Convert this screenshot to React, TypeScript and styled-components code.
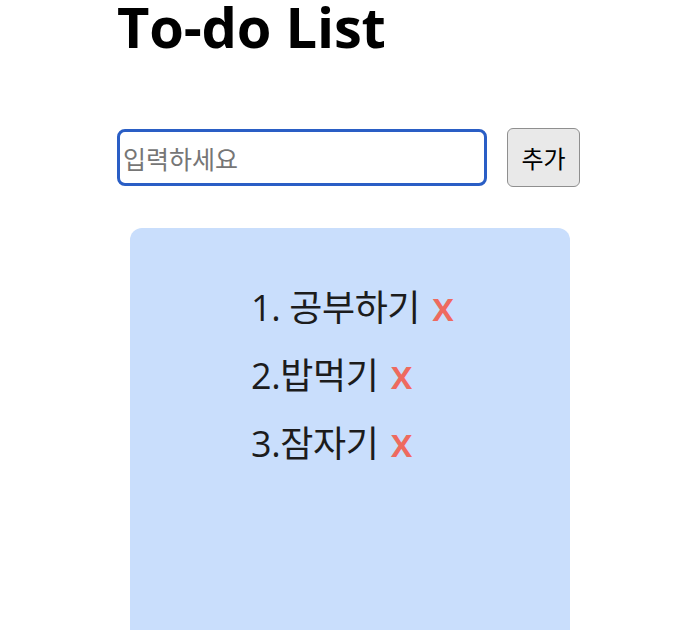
import React, { useState } from "react";
import styled, { createGlobalStyle } from "styled-components";

const Global = createGlobalStyle`
  html, body { margin: 0; padding: 0; background: #ffffff; }
  body { font-family: "Open Sans", "Noto Sans CJK KR", sans-serif; color: #111; }
`;

const Page = styled.main`
  display: flex;
  flex-direction: column;
  padding-left: 117px;
  width: 470px;
`;

const Title = styled.h1`
  margin: -2px 0 0 0;
  font-size: 56px;
  line-height: 56px;
  font-weight: 700;
  color: #000;
  letter-spacing: -0.2px;
`;

const Form = styled.form`
  display: flex;
  align-items: center;
  gap: 20px;
  margin-top: 74px;
`;

const Input = styled.input`
  box-sizing: border-box;
  width: 370px;
  height: 57px;
  padding: 0 3px;
  border: 3px solid #2a5ec5;
  border-radius: 8px;
  outline: none;
  font-family: "Noto Sans CJK KR", sans-serif;
  font-size: 25px;
  color: #111;
  &::placeholder { color: #767676; }
`;

const AddButton = styled.button`
  box-sizing: border-box;
  width: 73px;
  height: 59px;
  background: #e9e9e9;
  border: 1.5px solid #8f8f8f;
  border-radius: 6px;
  font-family: "Noto Sans CJK KR", sans-serif;
  font-size: 24px;
  color: #000;
  padding: 0;
`;

const Board = styled.section`
  box-sizing: border-box;
  margin: 41px 0 0 13px;
  width: 440px;
  min-height: 420px;
  background: #c9defc;
  border-radius: 12px;
  padding: 46px 0 0 121px;
`;

const List = styled.ul`
  list-style: none;
  margin: 0;
  padding: 0;
  display: flex;
  flex-direction: column;
`;

const Item = styled.li`
  height: 68px;
  font-size: 36px;
  line-height: 68px;
  color: #1c1c1c;
  letter-spacing: -0.4px;
  white-space: nowrap;
`;

const Remove = styled.span`
  color: #ee6a5f;
  font-size: 40px;
  font-weight: 600;
  line-height: 1;
  margin-left: 12px;
`;

export default function App() {
  const [todos] = useState(["1. 공부하기", "2.밥먹기", "3.잠자기"]);
  return (
    <>
      <Global />
      <Page>
        <Title>To-do List</Title>
        <Form onSubmit={(e) => e.preventDefault()}>
          <Input placeholder="입력하세요" autoFocus />
          <AddButton type="submit">추가</AddButton>
        </Form>
        <Board>
          <List>
            {todos.map((t) => (
              <Item key={t}>
                {t}
                <Remove>x</Remove>
              </Item>
            ))}
          </List>
        </Board>
      </Page>
    </>
  );
}
